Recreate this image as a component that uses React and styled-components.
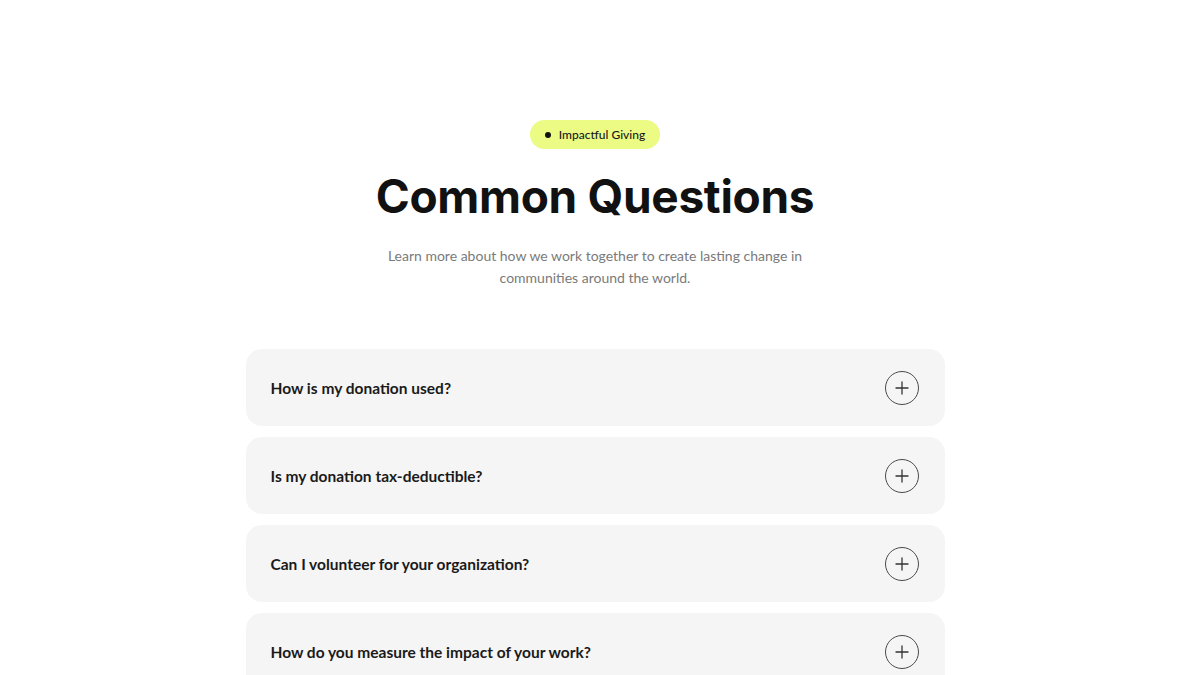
import React from 'react'
import styled, { createGlobalStyle } from 'styled-components'

const Global = createGlobalStyle`
    body {
        margin: 0;
        background: #ffffff;
        font-family: "Lato", "Liberation Sans", sans-serif;
    }
`
const Section = styled.section`
    display: flex;
    flex-direction: column;
    align-items: center;
    padding: 120px 10px 0 0;
`
const Badge = styled.div`
    display: flex;
    align-items: center;
    gap: 8px;
    height: 29px;
    padding: 0 15px;
    border-radius: 15px;
    background: #ecfb84;
    color: #1a1a1a;
    font-size: 12px;
    font-weight: 500;
`
const Dot = styled.span`
    width: 6px;
    height: 6px;
    border-radius: 50%;
    background: #111;
`
const Title = styled.h1`
    margin: 19px 0 0;
    font-family: "Inter", "Liberation Sans", sans-serif;
    font-size: 46px;
    font-weight: 700;
    letter-spacing: -0.3px;
    line-height: 56px;
    color: #111;
`
const Subtitle = styled.p`
    margin: 21px 0 0;
    width: 440px;
    text-align: center;
    font-size: 14px;
    line-height: 22px;
    color: #7a7a7a;
`
const List = styled.div`
    display: flex;
    flex-direction: column;
    gap: 11px;
    width: 699px;
    margin-top: 60px;
`
const Item = styled.div`
    display: flex;
    align-items: center;
    justify-content: space-between;
    height: 77px;
    padding: 0 26px 0 25px;
    border-radius: 16px;
    background: #f5f5f5;
`
const Question = styled.span`
    font-size: 15.5px;
    font-weight: 700;
    color: #1a1a1a;
`
const Toggle = styled.span`
    display: flex;
    align-items: center;
    justify-content: center;
    width: 32px;
    height: 32px;
    border: 1px solid #4a4a4a;
    border-radius: 50%;
    color: #333;
`

const questions = [
    'How is my donation used?',
    'Is my donation tax-deductible?',
    'Can I volunteer for your organization?',
    'How do you measure the impact of your work?',
]

function App() {
    return (
        <>
            <Global />
            <Section>
                <Badge><Dot />Impactful Giving</Badge>
                <Title>Common Questions</Title>
                <Subtitle>
                    Learn more about how we work together to create lasting change in communities around the world.
                </Subtitle>
                <List>
                    {questions.map((q, i) =>
                        <Item key={i}>
                            <Question>{q}</Question>
                            <Toggle>
                                <svg width="14" height="14" viewBox="0 0 14 14">
                                    <path d="M7 1v12M1 7h12" stroke="currentColor" strokeWidth="1.3" strokeLinecap="round" />
                                </svg>
                            </Toggle>
                        </Item>)}
                </List>
            </Section>
        </>
    )
}

export default App
